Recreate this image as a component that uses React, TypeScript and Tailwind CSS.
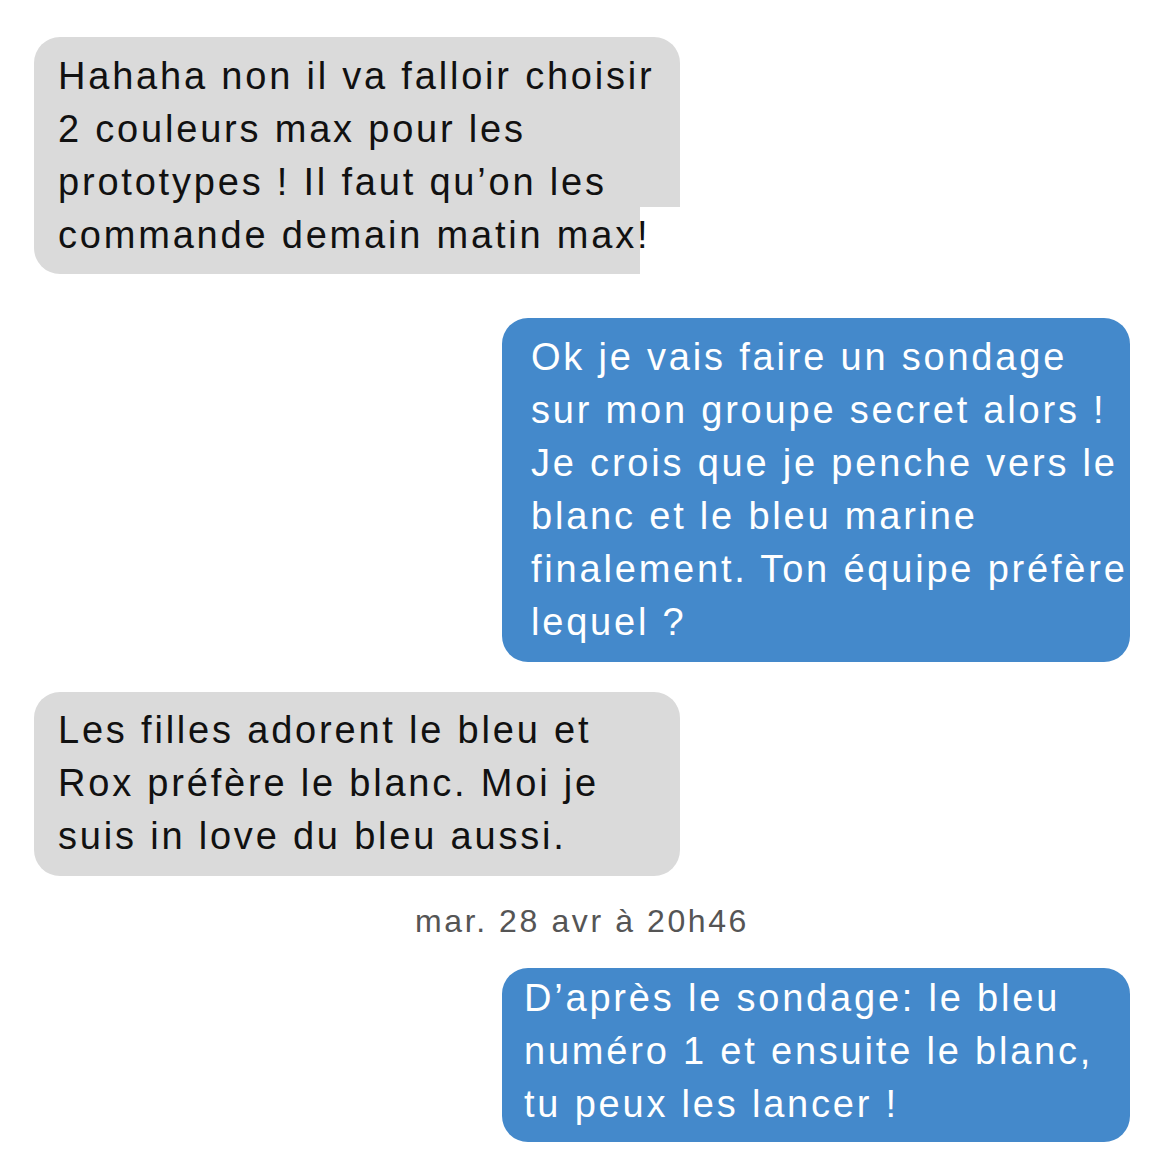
export default function App() {
  const font = { fontFamily: '"Liberation Sans", Arial, sans-serif' };
  return (
    <div className="w-[1160px] h-[1160px] bg-white relative overflow-hidden" style={font}>
      <div className="flex flex-col pt-[37px]">
        {/* bubble 1 with the cut-out lower right corner */}
        <div className="ml-[34px] w-[646px] h-[237px] relative rounded-[26px] rounded-br-none bg-[#dadada] pl-[24px] pt-[13px]">
          <div className="absolute right-0 bottom-0 w-[40px] h-[67px] bg-white" />
          <div className="relative text-[38px] leading-[53px] tracking-[2.8px] text-[#111] whitespace-nowrap">
            <div>Hahaha non il va falloir choisir</div>
            <div>2 couleurs max pour les</div>
            <div>prototypes ! Il faut qu’on les</div>
            <div>commande demain matin max!</div>
          </div>
        </div>

        <div className="ml-[502px] mt-[44px] w-[628px] h-[344px] rounded-[26px] bg-[#4489cb] pl-[29px] pt-[13px]">
          <div className="text-[38px] leading-[53px] tracking-[2.8px] text-white whitespace-nowrap">
            <div>Ok je vais faire un sondage</div>
            <div>sur mon groupe secret alors !</div>
            <div>Je crois que je penche vers le</div>
            <div>blanc et le bleu marine</div>
            <div>finalement. Ton équipe préfère</div>
            <div>lequel ?</div>
          </div>
        </div>

        <div className="ml-[34px] mt-[30px] w-[646px] h-[184px] rounded-[26px] bg-[#dadada] pl-[24px] pt-[12px]">
          <div className="text-[38px] leading-[53px] tracking-[2.8px] text-[#111] whitespace-nowrap">
            <div>Les filles adorent le bleu et</div>
            <div>Rox préfère le blanc. Moi je</div>
            <div>suis in love du bleu aussi.</div>
          </div>
        </div>

        <div className="mt-[28px] h-[34px] flex justify-center pl-[4px] text-[32px] leading-[34px] tracking-[2.6px] text-[#555] whitespace-nowrap">
          mar. 28 avr à 20h46
        </div>

        <div className="ml-[502px] mt-[30px] w-[628px] h-[174px] rounded-[26px] bg-[#4489cb] pl-[22px] pt-[4px]">
          <div className="text-[38px] leading-[53px] tracking-[2.8px] text-white whitespace-nowrap">
            <div>D’après le sondage: le bleu</div>
            <div>numéro 1 et ensuite le blanc,</div>
            <div>tu peux les lancer !</div>
          </div>
        </div>
      </div>
    </div>
  );
}
